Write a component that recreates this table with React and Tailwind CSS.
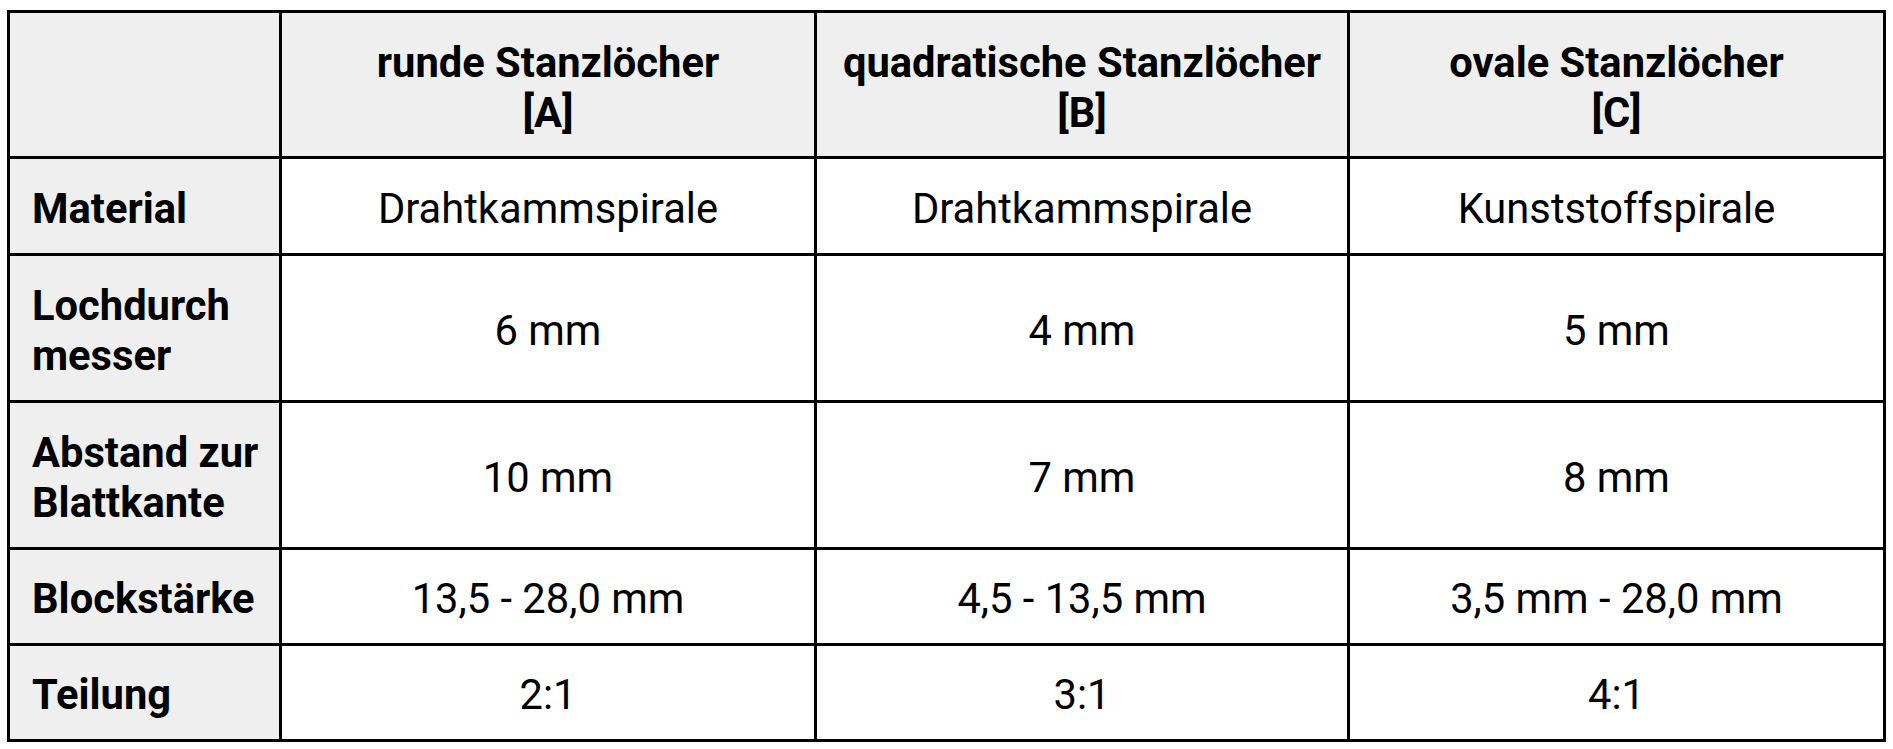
import React from "react";

// Stanzloch-Vergleich: Tabelle mit Kopfzeile und Kopfspalte
const columns = [
  { name: "runde Stanzlöcher", tag: "[A]" },
  { name: "quadratische Stanzlöcher", tag: "[B]" },
  { name: "ovale Stanzlöcher", tag: "[C]" },
];

const rows = [
  { label: ["Material"], h: "h-[97px]", values: ["Drahtkammspirale", "Drahtkammspirale", "Kunststoffspirale"] },
  { label: ["Lochdurch", "messer"], h: "h-[147px]", values: ["6 mm", "4 mm", "5 mm"] },
  { label: ["Abstand zur", "Blattkante"], h: "h-[147px]", values: ["10 mm", "7 mm", "8 mm"] },
  { label: ["Blockstärke"], h: "h-[96px]", values: ["13,5 - 28,0 mm", "4,5 - 13,5 mm", "3,5 mm - 28,0 mm"] },
  { label: ["Teilung"], h: "h-[96px]", values: ["2:1", "3:1", "4:1"] },
];

export default function App() {
  return (
    <div className="min-h-screen w-full bg-white pt-[10px] pl-[7px] font-['Roboto',sans-serif] text-black">
      <table className="table-fixed border-collapse w-[1879px] text-[41.7px] leading-[50px]">
        <colgroup>
          <col className="w-[272px]" />
          <col className="w-[535px]" />
          <col className="w-[533px]" />
          <col className="w-[536px]" />
        </colgroup>
        <thead>
          <tr className="h-[146px]">
            <th className="border-[3px] border-black bg-[#efefef]" />
            {columns.map((c) => (
              <th key={c.tag} className="border-[3px] border-black bg-[#efefef] font-bold text-center align-middle pt-[6px]">
                <div>{c.name}</div>
                <div>{c.tag}</div>
              </th>
            ))}
          </tr>
        </thead>
        <tbody>
          {rows.map((r) => (
            <tr key={r.label.join("")} className={r.h}>
              <td className="border-[3px] border-black bg-[#efefef] font-bold text-left align-middle pl-[22px] pr-2 pt-[5px]">
                {r.label.map((l) => (
                  <div key={l}>{l}</div>
                ))}
              </td>
              {r.values.map((v, i) => (
                <td key={i} className="border-[3px] border-black bg-white text-center align-middle pt-[5px]">
                  {v}
                </td>
              ))}
            </tr>
          ))}
        </tbody>
      </table>
    </div>
  );
}
